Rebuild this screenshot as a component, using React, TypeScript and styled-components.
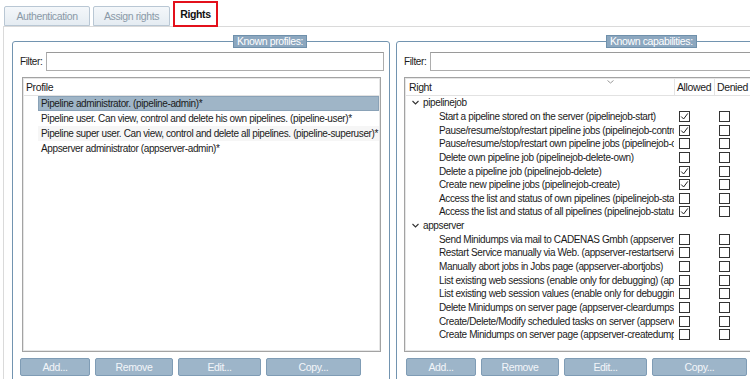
import styled, { createGlobalStyle } from 'styled-components'

const GlobalStyle = createGlobalStyle`
  html, body { margin: 0; padding: 0; background: #fff; }
  body {
    font-family: "Liberation Sans", Arial, sans-serif;
    font-size: 10px;
    letter-spacing: -0.38px;
    color: #1b1b1b;
  }
`

const Page = styled.div`
  width: 750px;
  height: 379px;
  overflow: hidden;
  background: #fff;
`

const TabBar = styled.div`
  display: flex;
  align-items: flex-end;
  height: 26px;
  padding-left: 4px;
  gap: 3px;
`

const Tab = styled.div<{ $active?: boolean; $w: number }>`
  width: ${p => p.$w}px;
  box-sizing: border-box;
  display: flex;
  align-items: center;
  justify-content: center;
  height: ${p => (p.$active ? 26 : 20)}px;
  margin-bottom: ${p => (p.$active ? -1 : 0)}px;
  position: relative;
  z-index: 1;
  border: ${p => (p.$active ? '2px solid #e3101b' : '1px solid #b9c7d4')};
  border-radius: ${p => (p.$active ? 0 : '2px 2px 0 0')};
  background: ${p => (p.$active ? '#fff' : 'linear-gradient(#f4f7fa, #e5ecf2)')};
  color: ${p => (p.$active ? '#111' : '#8a99a7')};
  font-weight: ${p => (p.$active ? 700 : 400)};
  font-size: 10.5px;
`

const Panel = styled.div`
  margin-left: 3px;
  border-left: 1px solid #dadada;
  border-top: 1px solid #dadada;
  height: 360px;
  display: flex;
  gap: 6px;
  padding: 8px 0 0 8px;
`

const Group = styled.fieldset<{ $w: number }>`
  flex: none;
  width: ${p => p.$w}px;
  box-sizing: border-box;
  margin: 0;
  padding: 4px 5px 0 7px;
  min-width: 0;
  height: 360px;
  border: 1px solid #7294b0;
  border-radius: 3px;
  display: flex;
  flex-direction: column;
`

const Legend = styled.legend<{ $offset: number }>`
  margin-left: ${p => p.$offset}px;
  padding: 0 3px;
  line-height: 11px;
  font-size: 10.5px;
  background: #8ca7bf;
  border: 1px solid #6f90ab;
  color: #fff;
`

const FilterRow = styled.div`
  display: flex;
  align-items: center;
  height: 19px;
`

const FilterLabel = styled.span`
  width: 26px;
  flex: none;
`

const Input = styled.div`
  flex: 1;
  height: 19px;
  box-sizing: border-box;
  border: 1px solid #adadad;
  border-top-color: #9a9a9a;
  background: #fff;
`

const Table = styled.div<{ $w?: number; $ml?: number }>`
  margin-top: 6px;
  margin-left: ${p => p.$ml ?? 0}px;
  width: ${p => (p.$w ? `${p.$w}px` : 'auto')};
  height: 275px;
  box-sizing: border-box;
  border: 1px solid #a3a3a3;
  box-shadow: inset 0 0 0 1px #e6e6e6;
  overflow: hidden;
  flex: none;
`

const Header = styled.div`
  display: flex;
  height: 16px;
  align-items: stretch;
  border-bottom: 1px solid #e2e2e2;
  margin: 1px 1px 0;
  position: relative;
  font-size: 10.5px;
`

const HeadCell = styled.div<{ $w?: number; $first?: boolean }>`
  display: flex;
  align-items: center;
  padding-left: ${p => (p.$first ? 3 : 2)}px;
  box-sizing: border-box;
  ${p => (p.$w ? `width: ${p.$w}px; flex: none;` : 'flex: 1;')}
  border-left: ${p => (p.$first || !p.$w ? 'none' : '1px solid #e4e4e4')};
`

const SortMark = styled.svg`
  position: absolute;
  left: 201px;
  top: 1px;
`

const ProfileRow = styled.div<{ $selected?: boolean; $alt?: boolean }>`
  height: 15px;
  display: flex;
  align-items: center;
  margin: 0 1px 0 15px;
  padding-left: 2px;
  box-sizing: border-box;
  white-space: nowrap;
  background: ${p => (p.$selected ? '#9fb5c7' : p.$alt ? '#f6f6f6' : '#fff')};
  border: 1px solid ${p => (p.$selected ? '#8aa2b7' : 'transparent')};
`

const TreeRow = styled.div`
  height: 13.65px;
  display: flex;
  align-items: center;
  margin: 0 1px;
`

const NameCell = styled.div<{ $indent: number }>`
  width: 268px;
  flex: none;
  box-sizing: border-box;
  padding-left: ${p => p.$indent}px;
  white-space: nowrap;
  overflow: hidden;
  display: flex;
  align-items: center;
`

const Chevron = styled.svg`
  margin-right: 4px;
  flex: none;
`

const BoxCell = styled.div<{ $w: number }>`
  width: ${p => p.$w}px;
  flex: none;
  padding-left: 5px;
  box-sizing: border-box;
  display: flex;
  align-items: center;
`

const Box = styled.span`
  width: 11px;
  height: 11px;
  box-sizing: border-box;
  border: 1px solid #333;
  background: #fff;
  display: flex;
  align-items: center;
  justify-content: center;
`

const ButtonRow = styled.div<{ $ml?: number }>`
  display: flex;
  gap: 5px;
  margin-top: 6px;
  margin-left: ${p => p.$ml ?? 0}px;
`

const Button = styled.div<{ $w: number }>`
  width: ${p => p.$w}px;
  height: 18px;
  box-sizing: border-box;
  border: 1px solid #7f9cb5;
  border-radius: 2px;
  background: #9db5c9;
  color: #f3f6f9;
  font-size: 10.5px;
  display: flex;
  align-items: center;
  justify-content: center;
  flex: none;
`

const Check = ({ on }: { on: boolean }) => (
  <Box>
    {on && (
      <svg width="9" height="9" viewBox="0 0 9 9">
        <path d="M1.2 4.5 L3.6 7 L7.8 1.4" fill="none" stroke="#222" strokeWidth="1" />
      </svg>
    )}
  </Box>
)

const profiles = [
  'Pipeline administrator. (pipeline-admin)*',
  'Pipeline user. Can view, control and delete his own pipelines. (pipeline-user)*',
  'Pipeline super user. Can view, control and delete all pipelines. (pipeline-superuser)*',
  'Appserver administrator (appserver-admin)*',
]

type Cap = { name: string; allowed: boolean }
const groups: { name: string; items: Cap[] }[] = [
  {
    name: 'pipelinejob',
    items: [
      { name: 'Start a pipeline stored on the server (pipelinejob-start)', allowed: true },
      { name: 'Pause/resume/stop/restart pipeline jobs (pipelinejob-control)', allowed: true },
      { name: 'Pause/resume/stop/restart own pipeline jobs (pipelinejob-control-own)', allowed: false },
      { name: 'Delete own pipeline job (pipelinejob-delete-own)', allowed: false },
      { name: 'Delete a pipeline job (pipelinejob-delete)', allowed: true },
      { name: 'Create new pipeline jobs (pipelinejob-create)', allowed: true },
      { name: 'Access the list and status of own pipelines (pipelinejob-status-own)', allowed: false },
      { name: 'Access the list and status of all pipelines (pipelinejob-status)', allowed: true },
    ],
  },
  {
    name: 'appserver',
    items: [
      { name: 'Send Minidumps via mail to CADENAS Gmbh (appserver-sendminidumps)', allowed: false },
      { name: 'Restart Service manually via Web. (appserver-restartservice)', allowed: false },
      { name: 'Manually abort jobs in Jobs page (appserver-abortjobs)', allowed: false },
      { name: 'List existing web sessions (enable only for debugging) (appserver-sessions)', allowed: false },
      { name: 'List existing web session values (enable only for debugging) (appserver-sessionvalues)', allowed: false },
      { name: 'Delete Minidumps on server page (appserver-cleardumps)', allowed: false },
      { name: 'Create/Delete/Modify scheduled tasks on server (appserver-tasks)', allowed: false },
      { name: 'Create Minidumps on server page (appserver-createdumps)', allowed: false },
    ],
  },
]

const Buttons = ({ ml }: { ml?: number }) => (
  <ButtonRow $ml={ml}>
    <Button $w={70}>Add...</Button>
    <Button $w={78}>Remove</Button>
    <Button $w={83}>Edit...</Button>
    <Button $w={95}>Copy...</Button>
  </ButtonRow>
)

export default function App() {
  return (
    <Page>
      <GlobalStyle />
      <TabBar>
        <Tab $w={86}>Authentication</Tab>
        <Tab $w={77}>Assign rights</Tab>
        <Tab $w={45} $active>Rights</Tab>
      </TabBar>
      <Panel>
        <Group $w={378}>
          <Legend $offset={213}>Known profiles:</Legend>
          <FilterRow>
            <FilterLabel>Filter:</FilterLabel>
            <Input />
          </FilterRow>
          <Table $ml={2} $w={359}>
            <Header>
              <HeadCell>Profile</HeadCell>
            </Header>
            {profiles.map((p, i) => (
              <ProfileRow key={p} $selected={i === 0} $alt={i % 2 === 0}>
                {p}
              </ProfileRow>
            ))}
          </Table>
          <Buttons />
        </Group>
        <Group $w={420}>
          <Legend $offset={202}>Known capabilities:</Legend>
          <FilterRow>
            <FilterLabel>Filter:</FilterLabel>
            <Input />
          </FilterRow>
          <Table $w={404}>
            <Header>
              <HeadCell $w={268} $first>Right</HeadCell>
              <HeadCell $w={40}>Allowed</HeadCell>
              <HeadCell $w={94}>Denied</HeadCell>
              <SortMark width="7" height="4" viewBox="0 0 7 4">
                <path d="M0.5 0.5 L3.5 3 L6.5 0.5" fill="none" stroke="#9a9a9a" strokeWidth="1" />
              </SortMark>
            </Header>
            {groups.map(g => (
              <div key={g.name}>
                <TreeRow>
                  <NameCell $indent={6}>
                    <Chevron width="7" height="5" viewBox="0 0 7 5">
                      <path d="M0.5 1 L3.5 4 L6.5 1" fill="none" stroke="#333" strokeWidth="1.1" />
                    </Chevron>
                    {g.name}
                  </NameCell>
                </TreeRow>
                {g.items.map(c => (
                  <TreeRow key={c.name}>
                    <NameCell $indent={33}>{c.name}</NameCell>
                    <BoxCell $w={40}>
                      <Check on={c.allowed} />
                    </BoxCell>
                    <BoxCell $w={40}>
                      <Check on={false} />
                    </BoxCell>
                  </TreeRow>
                ))}
              </div>
            ))}
          </Table>
          <Buttons ml={2} />
        </Group>
      </Panel>
    </Page>
  )
}
